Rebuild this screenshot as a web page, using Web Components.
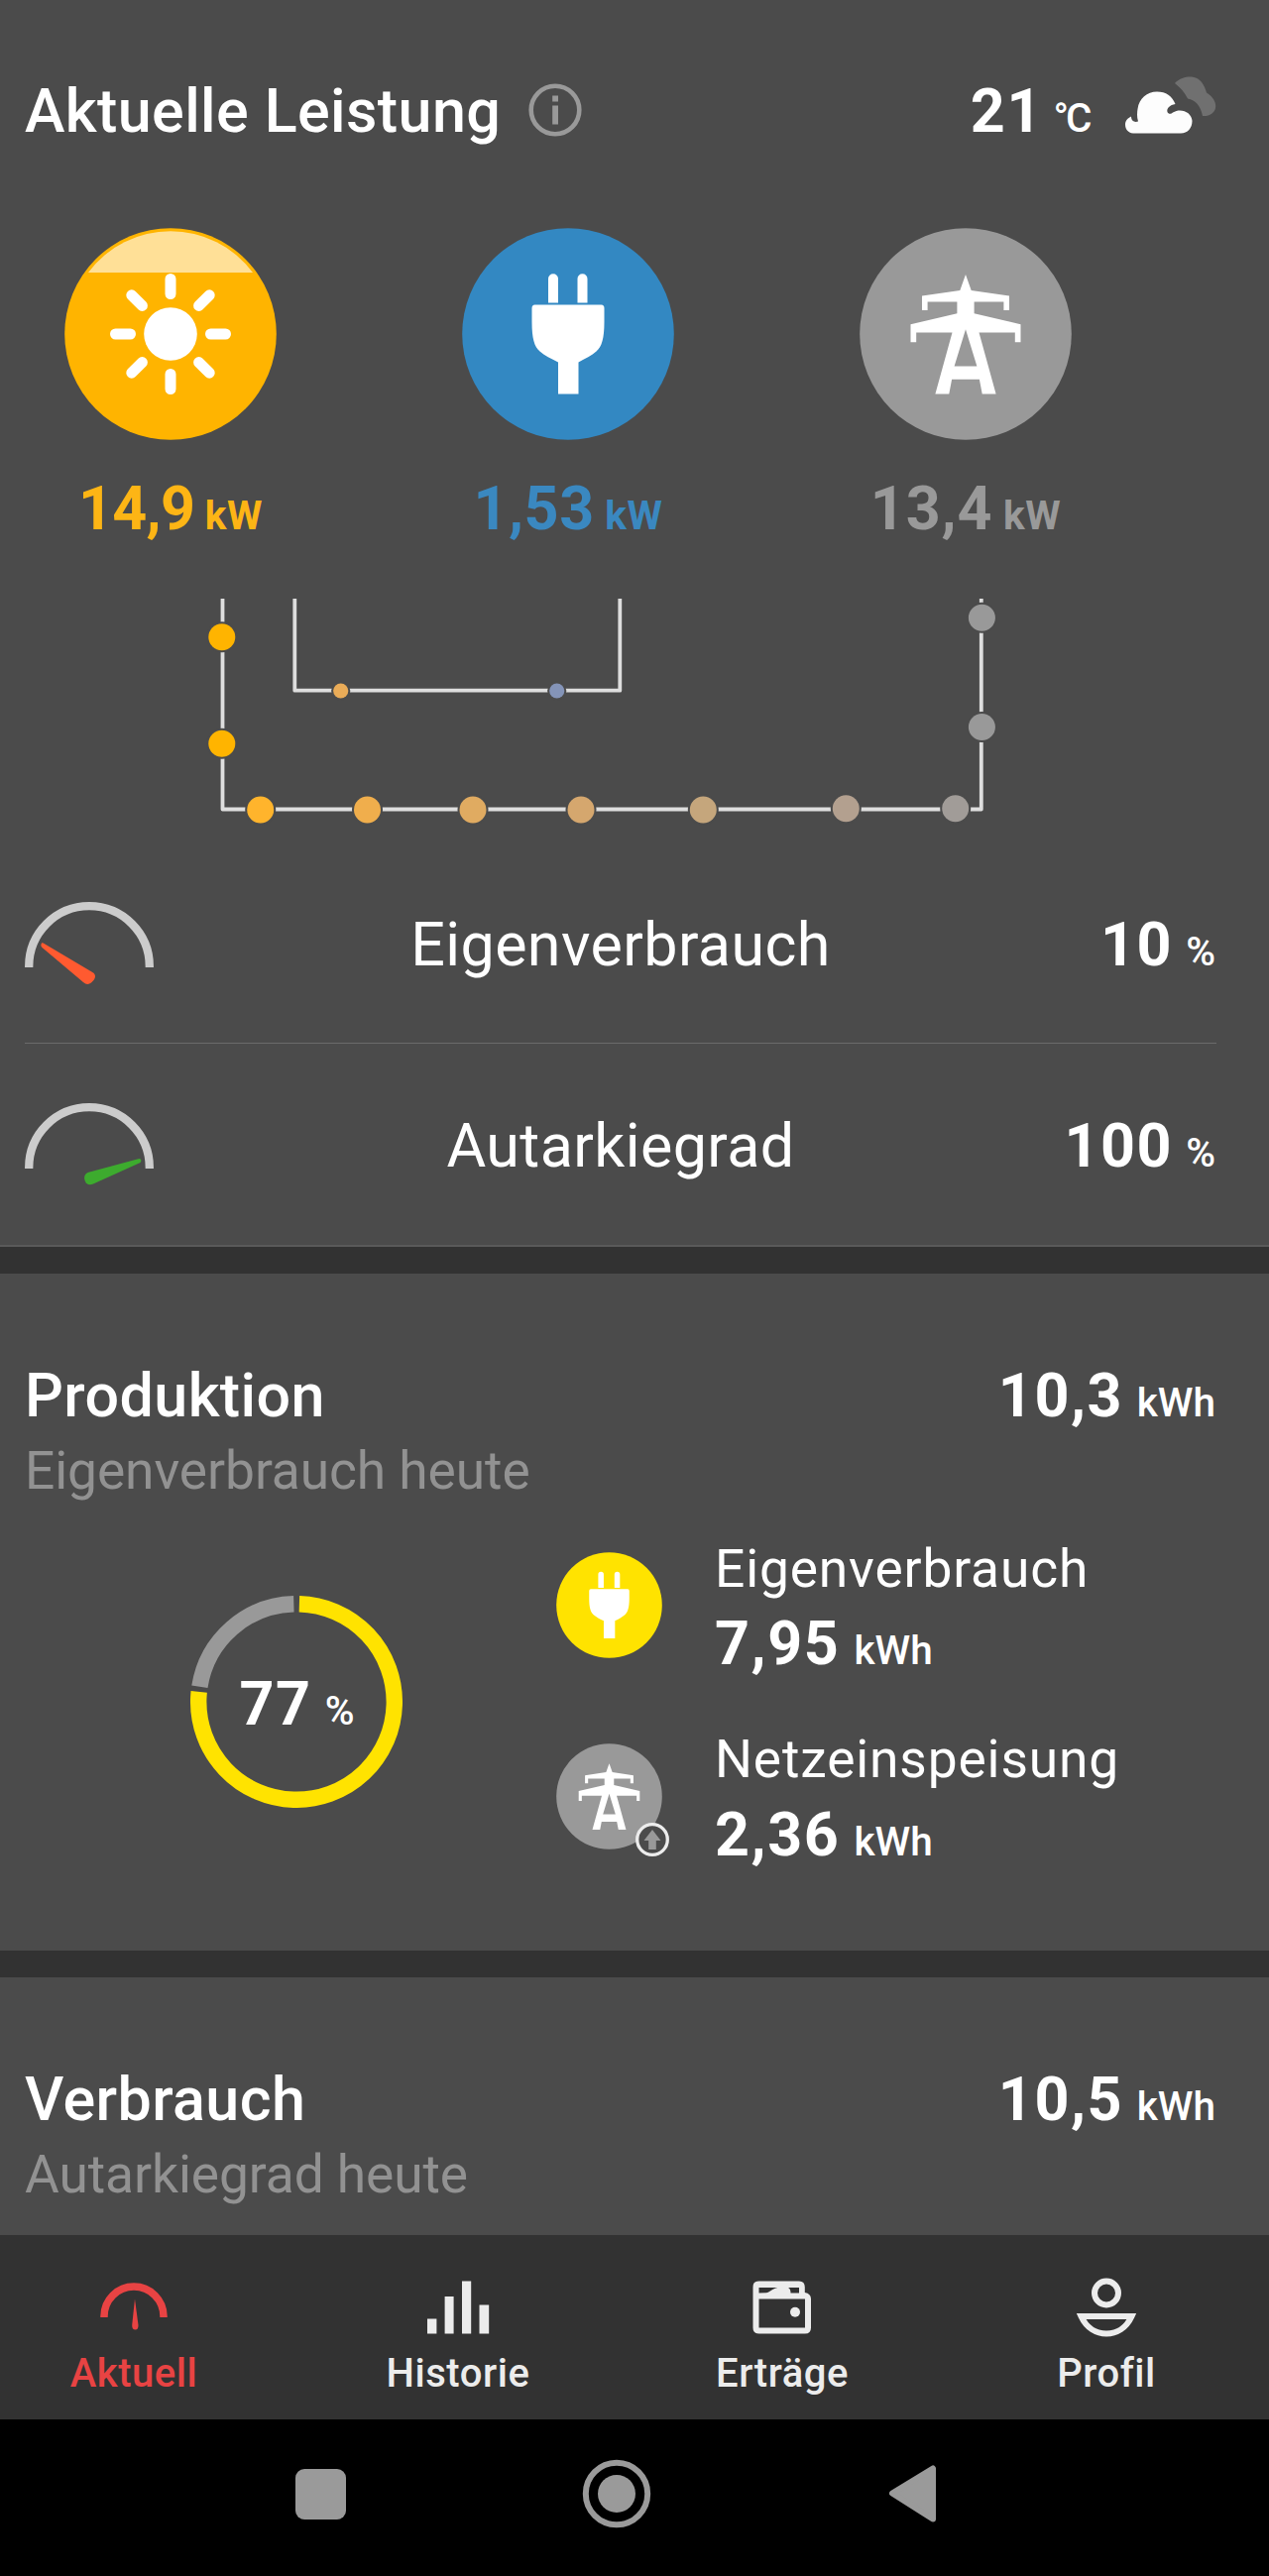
<!DOCTYPE html>
<html lang="de">
<head>
<meta charset="utf-8">
<title>Aktuelle Leistung</title>
<style>
body{margin:0;background:#4b4b4b;color:#fff;font-family:Roboto,"Liberation Sans",sans-serif}
</style>
</head>
<body>
<energy-app></energy-app>
<script>
const define = (name, render) => customElements.define(name, class extends HTMLElement {
  connectedCallback() {
    if (this.shadowRoot) return;
    this.attachShadow({ mode: 'open' }).innerHTML = render(this);
  }
});

const PLUG = `<g fill="#fff"><path d="M-20-31.500V-55.800a5 5 0 0 1 10 0V-31.500ZM9.500-31.500V-55.800a5 5 0 0 1 10 0V-31.500Z"/><path d="M-33.500-29.500H33.500Q36.500-29.500 36.500-26V-12C36.500 4 34 13 28.500 17.500C24 21.500 17 25 10.500 28.500V60.500H-10V28.500C-17 25-24 21.500-28.500 17.500C-34 13-36.500 4-36.500-12V-26Q-36.500-29.500-33.500-29.500Z"/></g>`;
const PYLON = `<path fill="#fff" fill-rule="evenodd" d="M0-60L5.700-44L44-38.500V-24H38.400V-32.500H8.600V-20.800L55.500-9.800V8.200H49.800V-1.500H13.500L30.600 60.500H16.700L13.900 45.800H-13.900L-16.700 60.500H-30.600L-13.500-1.500H-49.800V8.200H-55.500V-9.800L-8.600-20.800V-32.500H-38.400V-24H-44V-38.500L-5.700-44ZM0-4.800L11.400 32.500H-11.400Z"/>`;
const SUN = `<path d="M-83-62A103.500 103.500 0 0 1 83-62Z" fill="#ffe097"/><circle r="26.800" fill="#fff"/>` +
  `<path d="M0-40.500V-55.500M0 40.500V55.500M-40.500 0H-55.500M40.500 0H55.500M28.600 28.600L39.200 39.200M-28.600 28.600L-39.200 39.200M28.600-28.600L39.200-39.200M-28.600-28.600L-39.200-39.200" stroke="#fff" stroke-width="11" stroke-linecap="round"/>`;
const SYMBOLS = { plug: PLUG, pylon: PYLON, sun: SUN };

define('round-symbol', el => {
  const size = +el.getAttribute('size');
  const scale = el.getAttribute('scale') || 1;
  return `<style>:host{display:block;flex:none;width:${size}px;height:${size}px;position:relative}svg{display:block}::slotted(*){position:absolute;left:80px;top:80px}</style>
  <svg width="${size}" height="${size}" viewBox="${-size/2} ${-size/2} ${size} ${size}"><circle r="${size/2 - .2}" fill="${el.getAttribute('color')}"/><g transform="scale(${scale})">${SYMBOLS[el.getAttribute('kind')]}</g></svg><slot></slot>`;
});

define('up-badge', () => `<style>:host{display:block;width:34px;height:34px}svg{display:block}</style>
  <svg width="34" height="34" viewBox="-17 -17 34 34"><circle r="15.300" fill="#4b4b4b" stroke="#ececec" stroke-width="3.300"/><path d="M0-10L8.500 1H3.800V10H-3.800V1H-8.500Z" fill="#999"/></svg>`);

define('power-value', el => `<style>
  :host{display:flex;align-items:baseline;line-height:70px;white-space:nowrap}
  .n{font-size:61px;font-weight:700;letter-spacing:var(--n-ls,1.6px)}
  .u{font-size:40.500px;line-height:1;font-weight:var(--u-w,500);letter-spacing:var(--u-ls,0);margin-left:var(--gap,14px)}
  </style><span class="n">${el.getAttribute('n')}</span><span class="u">${el.getAttribute('u')}</span>`);

define('source-tile', el => `<style>:host{display:flex;flex-direction:column;align-items:center;width:214px;color:${el.getAttribute('tint')};--n-ls:${el.getAttribute('spacing')};--u-w:700;--u-ls:.6px;--gap:10.500px}
  power-value{margin-top:33.500px}</style>
  <round-symbol size="214" kind="${el.getAttribute('kind')}" color="${el.getAttribute('fill')}"></round-symbol>
  <power-value n="${el.getAttribute('n')}" u="kW"></power-value>`);

define('weather-now', () => `<style>:host{display:flex;align-items:center;--gap:10.500px;--u-w:500;--u-ls:-3px}svg{display:block;margin-left:36.500px}</style>
  <power-value n="21" u="°C"></power-value>
  <svg width="92" height="70" viewBox="1135 77 92 70">
  <path d="M1185 84C1190 78 1198 77 1202 77.500C1211 78.500 1215 86 1217 93.500C1224 98 1227 104 1226 109C1225 114 1220 117.500 1213 117C1211 107 1206 101 1198 99.500C1195 93 1190 88 1185 84Z" fill="#707070"/>
  <path d="M1143 134.500C1137.500 134 1135 130 1135 125.500C1135 122 1137.500 119 1141 117.500C1141 121.500 1144 124 1148 122.500C1146.500 118 1147 113 1147.500 110C1149 99 1157 92.500 1167 92.500C1176 92.500 1182.500 97 1185.500 105C1180 106 1176.500 109 1177.500 113C1178.500 115.500 1181.500 115 1183 113.500C1191 108.500 1202 113 1202.500 122C1202.500 129 1198 134.500 1191 134.500Z" fill="#fdfdfd"/></svg>`);

define('energy-flow', () => {
  const dots = [[223.8,642.7,'#ffb400'],[223.8,750.3,'#ffb400'],[262.7,817,'#ffb42c'],[370.5,817,'#f0ae4c'],[477,817,'#e0ab61'],[586,817,'#d5a76e'],[709.3,817,'#c5a67c'],[853.3,815.7,'#b3a08f'],[963.7,815.7,'#a19c98'],[990.4,733.5,'#999'],[990.4,623.3,'#999']]
    .map(d => [...d, 13.5]).concat([[343.7,697,'#eaac58',7.6],[561.7,697,'#8494b8',7.6]]);
  return `<style>:host{display:block;height:246px;margin-top:56.500px}svg{display:block}</style>
  <svg width="1280" height="246" viewBox="0 604 1280 246"><g fill="none" stroke="#dedede" stroke-width="3.800" stroke-linejoin="round"><path d="M224.500 604V816.500H989.800V604"/><path d="M297.300 604V696.700H625.300V604"/></g>
  ${dots.map(([x, y, c, r]) => `<circle cx="${x}" cy="${y}" r="${r + 2}" fill="#4b4b4b"/><circle cx="${x}" cy="${y}" r="${r}" fill="${c}"/>`).join('')}</svg>`;
});

define('gauge-row', el => `<style>
  :host{display:grid;grid-template-columns:240px 1fr 240px;height:203px;box-sizing:border-box;margin:0 53px 0 25px;align-items:start}
  svg{display:block;margin-top:60px}
  .l{margin-top:68.300px;font-size:61px;line-height:70px;text-align:center;letter-spacing:.4px}
  power-value{margin-top:68.300px;padding-right:1px;justify-content:flex-end;--gap:13px}</style>
  <svg width="131" height="88" viewBox="25 910 131 88"><path d="M29.200 976V975A60.800 60.800 0 0 1 150.800 975V976" fill="none" stroke="#ccc" stroke-width="8.300"/><g>${el.getAttribute('level') === 'low'
    ? '<path d="M42 951.500Q40.500 954 42.500 956L84 991Q88 994.500 92 991.500Q97.500 987 95.500 983Q95 981.500 92.500 980.500L44.500 952Q43 951 42 951.500Z" fill="#ff5a30"/>'
    : '<path d="M141 966Q143.500 967.500 141.500 970L94 991.500Q88 994 85.800 988.500Q83.500 982.500 88.500 980L138.500 966.500Z" fill="#3dab2e"/>'}</g></svg>
  <div class="l"><slot></slot></div><power-value n="${el.getAttribute('n')}" u="%"></power-value>`);

define('energy-card', el => `<style>
  :host{display:block;box-sizing:border-box;padding:87.700px 54px 0 25px;background:#4b4b4b}
  .h{display:flex;justify-content:space-between;--gap:13.500px}
  .t{font-size:61px;font-weight:500;line-height:70px;letter-spacing:.4px}
  .s{margin-top:11.600px;font-size:53.300px;line-height:60px;letter-spacing:-.08px;color:#929292}
  </style><div class="h"><div class="t">${el.getAttribute('title-text')}</div><power-value n="${el.getAttribute('n')}" u="kWh"></power-value></div>
  <div class="s">${el.getAttribute('sub')}</div><slot></slot>`);

define('share-donut', () => {
  const C = 2 * Math.PI * 98.8, gap = 5.8 / C, share = .77;
  const arc = (from, to, c) => `<circle r="98.800" fill="none" stroke="${c}" stroke-width="16.400" stroke-dasharray="${(to - from - gap) * C} ${C}" transform="rotate(${-90 + (from + gap / 2) * 360})"/>`;
  return `<style>:host{display:grid;width:214px;height:214px;place-items:center;flex:none;margin-top:57px}svg,power-value{grid-area:1/1}power-value{--gap:13px;padding:5px 0 0 1px}</style>
  <svg width="214" height="214" viewBox="-107 -107 214 214">${arc(0, share, '#ffe300')}${arc(share, 1, '#999')}</svg><power-value n="77" u="%"></power-value>`;
});

define('share-item', el => `<style>:host{display:flex;gap:53.500px;align-items:flex-start}
  .i{margin-top:13.200px}.l{font-size:53.300px;line-height:60px;letter-spacing:.85px;white-space:nowrap}power-value{margin-top:10.400px}</style>
  <div class="i"><slot></slot></div><div><div class="l">${el.getAttribute('label')}</div><power-value n="${el.getAttribute('n')}" u="kWh"></power-value></div>`);

define('share-body', () => `<style>:host{display:flex;align-items:flex-start;padding:38.300px 0 0 167px}.list{display:flex;flex-direction:column;gap:52.500px;margin-left:154.500px}</style>
  <share-donut></share-donut><div class="list">
  <share-item label="Eigenverbrauch" n="7,95"><round-symbol size="107" scale=".555" kind="plug" color="#ffe300"></round-symbol></share-item>
  <share-item label="Netzeinspeisung" n="2,36"><round-symbol size="107" scale=".555" kind="pylon" color="#999"><up-badge></up-badge></round-symbol></share-item></div>`);

const NAV = {
  Aktuell: `<path d="M-30 20V19A30 30 0 0 1 30 19V20" fill="none" stroke="currentColor" stroke-width="7.500"/><path d="M1 1.500L4.500 28Q4.500 32.500 1.500 32.500Q-1.800 32.500-1.800 28Z" fill="currentColor"/>`,
  Historie: `<path d="M-31 21.500h9.400v15h-9.400ZM-13.400-1h9v37.500h-9ZM4-16.500h9.200v53H4ZM21.500 7.500h9.700v29h-9.700Z" fill="currentColor"/>`,
  'Erträge': `<path fill="currentColor" fill-rule="evenodd" d="M-23.500-16.500H17Q22.800-16.500 22.800-10.500V-5Q29-4 29 1.500V30.500Q29 36.500 23 36.500H-23.500Q-29.500 36.500-29.500 30.500V-10.500Q-29.500-16.500-23.500-16.500ZM-23.500 1.500V30.500H23V1.500ZM-23.500-10V-4.500L-16-4.700C-13-5-10-9-4.500-10ZM6-10Q8.500-9 8.500-4.500H17V-10Z"/><circle cx="13" cy="14.800" r="5" fill="currentColor"/>`,
  Profil: `<circle cy="-4.500" r="12" fill="none" stroke="currentColor" stroke-width="6"/><path d="M-25.500 19H25.500C20 31 10 36.500 0 36.500S-20 31-25.500 19Z" fill="none" stroke="currentColor" stroke-width="6"/>`
};
define('nav-item', el => `<style>:host{display:flex;flex-direction:column;align-items:center;color:#ececec}:host([active]){color:#e84343}
  svg{display:block;margin-top:42.500px}span{font-size:40px;font-weight:500;line-height:50px;margin-top:6.500px;letter-spacing:.55px}</style>
  <svg width="80" height="66" viewBox="-40 -20 80 66">${NAV[el.textContent]}</svg><span><slot></slot></span>`);

define('tab-bar', () => `<style>:host{display:grid;grid-template-columns:repeat(4,270px);gap:57px;height:186px;background:#323232}</style>
  <nav-item active>Aktuell</nav-item><nav-item>Historie</nav-item><nav-item>Erträge</nav-item><nav-item>Profil</nav-item>`);

define('system-bar', () => `<style>:host{display:flex;align-items:center;height:158px;background:#000;padding-left:298px;box-sizing:border-box}svg{display:block;flex:none;margin-top:-8px}.c{margin-left:238px}.b{margin-left:238.500px}</style>
  <svg width="51" height="51"><rect width="51" height="51" rx="9" fill="#9a9a9a"/></svg>
  <svg class="c" width="70" height="70" viewBox="-35 -35 70 70"><circle r="31.200" fill="none" stroke="#9a9a9a" stroke-width="6"/><circle r="19" fill="#9a9a9a"/></svg>
  <svg class="b" width="49" height="60"><path d="M4 29.500L45 4.500V55.500Z" fill="#9a9a9a" stroke="#9a9a9a" stroke-width="6" stroke-linejoin="round"/></svg>`);

define('live-panel', () => `<style>
  :host{display:block;height:1258px;box-sizing:border-box;padding-top:77px;border-bottom:2px solid #5a5a5a}
  header{display:flex;align-items:center;height:70px;padding:0 53px 0 25px}
  h1{margin:0;font-size:61px;font-weight:500;line-height:70px;letter-spacing:.4px}
  .info{margin-left:27.500px;margin-right:auto;margin-top:-3px}
  .tiles{display:flex;gap:187px;padding:83px 0 0 65px}
  hr{border:0;height:1px;background:#6b6b6b;margin:-1px 53px 0 25px}
  </style><header><h1>Aktuelle Leistung</h1>
  <svg class="info" width="54" height="54" viewBox="-27 -27 54 54"><circle r="24.300" fill="none" stroke="#999" stroke-width="4.600"/><path d="M-2.800-14.500h5.800v6h-5.800ZM-2.800-4.500h5.800v19h-5.800Z" fill="#999"/></svg>
  <weather-now></weather-now></header>
  <div class="tiles"><source-tile kind="sun" fill="#ffb400" tint="#fdb515" n="14,9" spacing="-.7px"></source-tile><source-tile kind="plug" fill="#3388c2" tint="#3a88c0" n="1,53" spacing=".6px"></source-tile><source-tile kind="pylon" fill="#999" tint="#999" n="13,4" spacing=".9px"></source-tile></div>
  <energy-flow></energy-flow>
  <gauge-row level="low" n="10">Eigenverbrauch</gauge-row><hr><gauge-row level="high" n="100">Autarkiegrad</gauge-row>`);

define('energy-app', () => `<style>
  :host{display:flex;flex-direction:column;height:2599px;overflow:hidden;background:#323232}
  live-panel{background:#4b4b4b;flex:none}
  .p{height:683px;margin-top:27px;flex:none}.v{height:260px;margin-top:27px;flex:none}tab-bar,system-bar{flex:none}
  </style><live-panel></live-panel>
  <energy-card class="p" title-text="Produktion" n="10,3" sub="Eigenverbrauch heute"><share-body></share-body></energy-card>
  <energy-card class="v" title-text="Verbrauch" n="10,5" sub="Autarkiegrad heute"></energy-card>
  <tab-bar></tab-bar><system-bar></system-bar>`);
</script>
</body>
</html>
